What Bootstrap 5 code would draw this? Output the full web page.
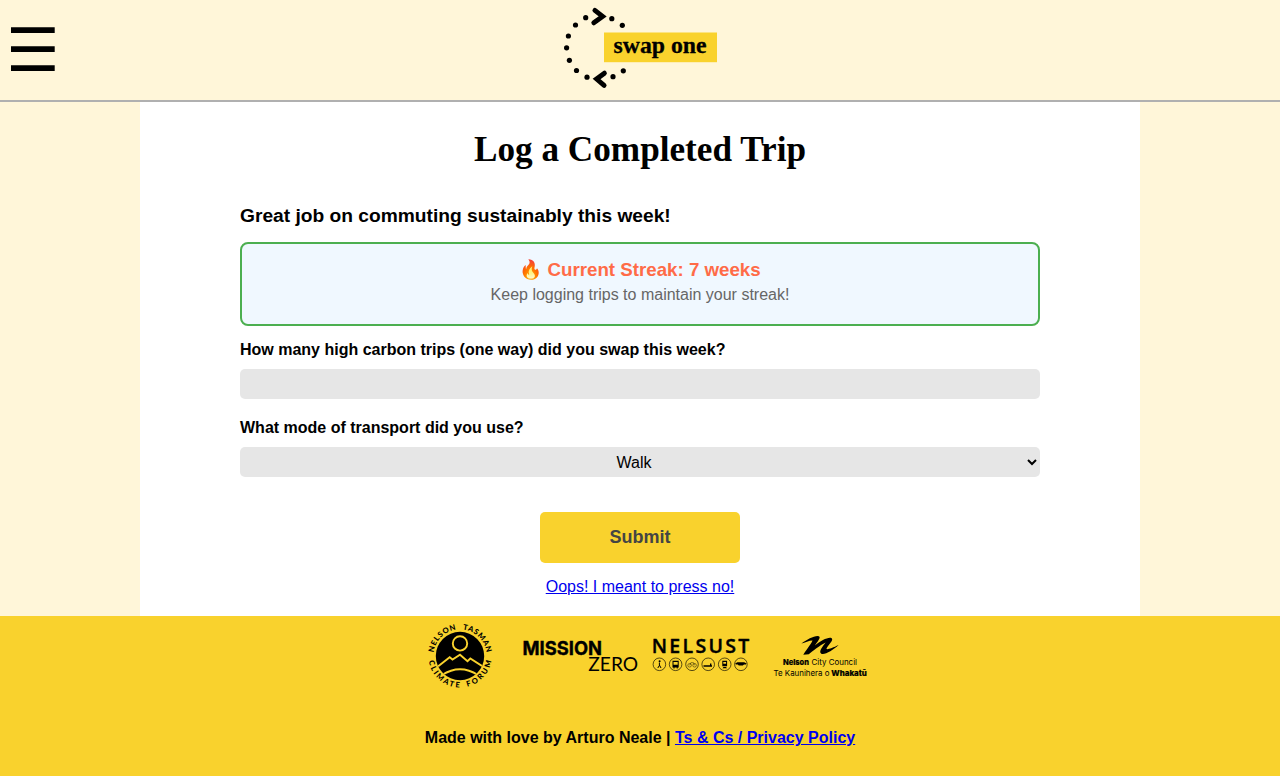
<!DOCTYPE html>
<html lang="en">
<head>
<meta charset="utf-8">
<meta name="viewport" content="width=device-width, initial-scale=1">
<title>Log a Completed Trip</title>
<link href="https://cdn.jsdelivr.net/npm/bootstrap@5.3.0/dist/css/bootstrap.min.css" rel="stylesheet">
<style>
body{background:#fff6d9;font-family:"Liberation Sans",Arial,sans-serif;color:#000;font-size:16px;line-height:18px}
.topbar{height:102px;border-bottom:2px solid #b0b0b0}
.menu-btn{left:11px;top:27px;width:44px;height:44px;border:0;background:none}
.sheet{width:1000px;height:514px;padding:0 100px;background:#fff}
.sheet h1{font:bold 35.2px/42px "Liberation Serif",serif;padding-top:27px;margin-bottom:34px}
.praise{font-size:19.2px;line-height:22px;font-weight:bold;margin:0 0 15px}
.streak{height:84px;background:#f0f8ff;border:2px solid #4caf50;border-radius:8px;padding-top:15px}
.streak-count{font-size:18.72px;line-height:22px;font-weight:bold;color:#ff6b47}
.streak-note{color:#666;margin-top:5px}
.q{display:block;font-weight:bold;margin-bottom:10px;padding-top:20px}
.q-first{padding-top:15px}
.field{display:block;width:100%;height:30px;border:0;border-radius:5px;background:#e6e6e6;color:#000;text-align:center;font-size:16px;padding:0}
.after{padding-top:35px;gap:15px}
.send{width:200px;height:51px;border:0;border-radius:5px;background:#f9d22d;color:#444;font-size:18px;font-weight:bold;padding:0 0 2px}
a{color:#00e}
.foot{height:160px;background:#f9d22d}
.credit{font-weight:bold;padding-top:33px}
svg{display:block}
</style>
</head>
<body>
<header class="topbar position-relative d-flex justify-content-center">
  <button class="menu-btn position-absolute p-0" aria-label="Menu">
    <svg width="44" height="44"><path d="M0 .3h43.7V6H0zM0 19.3h43.7V25H0zM0 38.3h43.7V44H0z"/></svg>
  </button>
  <svg width="180" height="100" viewBox="550 0 180 100" role="img" aria-label="swap one">
    <g>
      <circle cx="585.7" cy="17.7" r="2.6"/><circle cx="575.5" cy="25" r="2.6"/><circle cx="568.4" cy="36" r="2.6"/>
      <circle cx="566.6" cy="47.8" r="2.6"/><circle cx="569.4" cy="60.3" r="2.6"/><circle cx="576.5" cy="70.5" r="2.6"/>
      <circle cx="587" cy="77.2" r="2.6"/><circle cx="613" cy="76.7" r="2.6"/><circle cx="623.3" cy="70.8" r="2.6"/>
      <circle cx="611.8" cy="18.7" r="2.6"/><circle cx="622.3" cy="25.3" r="2.6"/>
    </g>
    <path d="M594.9 10.4L602.6 16.4L593.8 22.8M604.4 73.2L596.6 79L604.1 85.4" fill="none" stroke="#000" stroke-width="4.9" stroke-linecap="round"/>
    <rect x="604" y="32.5" width="113" height="29.7" fill="#f9d22d"/>
    <text x="613.5" y="52.7" textLength="93" lengthAdjust="spacingAndGlyphs" font-family="Liberation Serif, serif" font-size="23.5" font-weight="bold" stroke="#000" stroke-width=".3">swap one</text>
  </svg>
</header>
<main class="sheet mx-auto">
  <h1 class="text-center">Log a Completed Trip</h1>
  <p class="praise">Great job on commuting sustainably this week!</p>
  <div class="streak text-center">
    <div class="streak-count">🔥 Current Streak: 7 weeks</div>
    <div class="streak-note">Keep logging trips to maintain your streak!</div>
  </div>
  <form onsubmit="return false">
    <label class="q q-first" for="trips">How many high carbon trips (one way) did you swap this week?</label>
    <input class="field" id="trips" type="text">
    <label class="q" for="mode">What mode of transport did you use?</label>
    <select class="field" id="mode"><option>Walk</option></select>
    <div class="after d-flex flex-column align-items-center">
      <button class="send">Submit</button>
      <a href="#">Oops! I meant to press no!</a>
    </div>
  </form>
</main>
<footer class="foot text-center">
  <svg class="mx-auto" width="460" height="80" viewBox="410 616 460 80" role="img" aria-label="Our partners">
    <defs>
      <path id="arcTop" d="M433.4 656A26.6 26.6 0 0 1 486.6 656"/>
      <path id="arcBottom" d="M428.4 656A31.6 31.6 0 0 0 491.6 656"/>
      <clipPath id="disc"><circle cx="460" cy="656" r="24.2"/></clipPath>
    </defs>
    <circle cx="460" cy="656" r="24.2"/>
    <g fill="none" stroke="#f9d22d" stroke-width="1.9" clip-path="url(#disc)">
      <circle cx="460" cy="643.4" r="7.2"/>
      <path d="M436 668L449.7 657.2L452.5 659.5L460 654.8L467.5 661.2L470.3 658.5L485 668"/>
      <path d="M442 675Q460 663.5 478 675"/>
    </g>
    <g font-family="Lato, sans-serif" font-size="7.6" font-weight="900">
      <text><textPath href="#arcTop" startOffset="3.5" textLength="34">NELSON</textPath></text>
      <text><textPath href="#arcTop" startOffset="44.5" textLength="35">TASMAN</textPath></text>
      <text><textPath href="#arcBottom" startOffset="5" textLength="44">CLIMATE</textPath></text>
      <text><textPath href="#arcBottom" startOffset="57" textLength="37">FORUM</textPath></text>
    </g>
    <text x="522.5" y="654.6" font-family="Inter, sans-serif" font-size="19" font-weight="700" textLength="79.5" lengthAdjust="spacingAndGlyphs" stroke="#000" stroke-width=".4">MISSION</text>
    <text x="588.3" y="670.8" font-family="Lato, sans-serif" font-size="19.5" textLength="49.8" lengthAdjust="spacingAndGlyphs">ZERO</text>
    <!-- NELSUST wordmark and transport badges -->
    <text x="651.8" y="653" font-family="Open Sans, sans-serif" font-weight="600" font-size="19.5" textLength="97.5" stroke="#000" stroke-width=".4" stroke-linejoin="round">NELSUST</text>
    <g fill="none" stroke="#000" stroke-width=".65">
      <circle cx="659.4" cy="664.3" r="6.3"/><circle cx="675.6" cy="664.3" r="6.3"/><circle cx="692" cy="664.3" r="6.3"/>
      <circle cx="708.2" cy="664.3" r="6.3"/><circle cx="724.7" cy="664.3" r="6.3"/><circle cx="740.9" cy="664.3" r="6.3"/>
      <path d="M659.4 662.5v3l-1.6 2.5M659.4 665l1.6 3" stroke-width="1"/>
      <g stroke-width=".45"><circle cx="689.6" cy="665.3" r="1.8"/><circle cx="694.6" cy="665.3" r="1.8"/><path d="M689.6 665.3l1.3-2.6h2.6l1.1 2.6"/></g>
      <path d="M703.5 666h8.5M710.7 665.2v-1.8" stroke-width="1.4"/>
    </g>
    <circle cx="659.6" cy="661.2" r="1"/>
    <path d="M672.5 660.8h6.2v6.6h-1v1h-1v-1h-2.2v1h-1v-1h-1zM722.3 660.8h4.8v5.4h-4.8zM722.5 668.3l1-1.3h2.5l1 1.3zM735.2 663.4l2.2-1.2h6.8l2.3 1.2-.5 1.2h-2l-1.2.8h-4l-1-.8h-2z"/>
    <path d="M673.5 661.9h4.2v2.9h-4.2zM723.3 662h2.8v1.8h-2.8z" fill="#f9d22d"/>
    <!-- Council brush mark -->
    <path d="M801.4 643.5C807 639.5 813 636.2 817.6 636C821.5 636.1 819.5 639.5 814.8 645.4C821 640.5 829 636.3 831.7 638.2C834 640 828 645.3 826.5 648.5C826 650.3 832 648.3 838.6 645.1C833 650.4 824.7 655.2 821.3 653.7C818.2 652 822.8 646.3 825.6 642.6C820 645.2 812.4 651.6 808.8 654.3L803.3 654.7C805.4 650.8 810.8 644.6 812.5 640.4C809.7 640.2 805 642.4 801.4 643.5Z"/>
    <g font-family="Inter, sans-serif" font-size="8">
      <text x="783" y="665" textLength="26" lengthAdjust="spacingAndGlyphs" font-weight="800" stroke="#000" stroke-width=".2">Nelson</text>
      <text x="811.5" y="665" textLength="45.5" lengthAdjust="spacingAndGlyphs">City Council</text>
      <text x="773.5" y="675.8" textLength="56" lengthAdjust="spacingAndGlyphs">Te Kaunihera o</text>
      <text x="831.3" y="675.8" textLength="35.5" lengthAdjust="spacingAndGlyphs" font-weight="800" stroke="#000" stroke-width=".2">Whakatū</text>
    </g>
  </svg>
  <p class="credit mb-0">Made with love by Arturo Neale | <a href="#">Ts &amp; Cs / Privacy Policy</a></p>
</footer>
<script src="https://cdn.jsdelivr.net/npm/bootstrap@5.3.0/dist/js/bootstrap.bundle.min.js"></script>
</body>
</html>
